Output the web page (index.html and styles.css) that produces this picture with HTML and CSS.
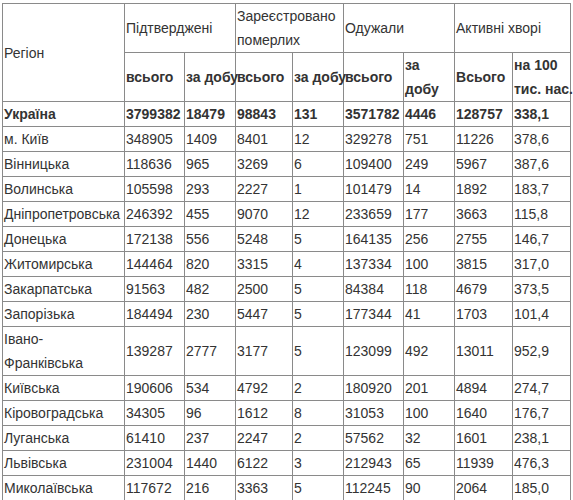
FILE: index.html
```html
<!DOCTYPE html>
<html lang="uk">
<head>
<meta charset="utf-8">
<title>Статистика</title>
<link rel="stylesheet" href="styles.css">
</head>
<body>
<table class="stats">
  <colgroup>
    <col class="c-region">
    <col class="c60"><col class="c51">
    <col class="c57"><col class="c51">
    <col class="c60"><col class="c51">
    <col class="c58"><col class="c58">
  </colgroup>
  <thead>
    <tr class="head1">
      <td rowspan="2">Регіон</td>
      <td colspan="2">Підтверджені</td>
      <td colspan="2">Зареєстровано<br>померлих</td>
      <td colspan="2">Одужали</td>
      <td colspan="2">Активні хворі</td>
    </tr>
    <tr class="head2">
      <td>всього</td><td class="nw">за добу</td>
      <td>всього</td><td class="nw">за добу</td>
      <td>всього</td><td>за<br>добу</td>
      <td>Всього</td><td class="nw">на 100<br>тис. нас.</td>
    </tr>
  </thead>
  <tbody>
    <tr class="total"><td>Україна</td><td>3799382</td><td>18479</td><td>98843</td><td>131</td><td>3571782</td><td>4446</td><td>128757</td><td>338,1</td></tr>
    <tr><td>м. Київ</td><td>348905</td><td>1409</td><td>8401</td><td>12</td><td>329278</td><td>751</td><td>11226</td><td>378,6</td></tr>
    <tr><td>Вінницька</td><td>118636</td><td>965</td><td>3269</td><td>6</td><td>109400</td><td>249</td><td>5967</td><td>387,6</td></tr>
    <tr><td>Волинська</td><td>105598</td><td>293</td><td>2227</td><td>1</td><td>101479</td><td>14</td><td>1892</td><td>183,7</td></tr>
    <tr><td>Дніпропетровська</td><td>246392</td><td>455</td><td>9070</td><td>12</td><td>233659</td><td>177</td><td>3663</td><td>115,8</td></tr>
    <tr><td>Донецька</td><td>172138</td><td>556</td><td>5248</td><td>5</td><td>164135</td><td>256</td><td>2755</td><td>146,7</td></tr>
    <tr><td>Житомирська</td><td>144464</td><td>820</td><td>3315</td><td>4</td><td>137334</td><td>100</td><td>3815</td><td>317,0</td></tr>
    <tr><td>Закарпатська</td><td>91563</td><td>482</td><td>2500</td><td>5</td><td>84384</td><td>118</td><td>4679</td><td>373,5</td></tr>
    <tr><td>Запорізька</td><td>184494</td><td>230</td><td>5447</td><td>5</td><td>177344</td><td>41</td><td>1703</td><td>101,4</td></tr>
    <tr><td>Івано-<br>Франківська</td><td>139287</td><td>2777</td><td>3177</td><td>5</td><td>123099</td><td>492</td><td>13011</td><td>952,9</td></tr>
    <tr><td>Київська</td><td>190606</td><td>534</td><td>4792</td><td>2</td><td>180920</td><td>201</td><td>4894</td><td>274,7</td></tr>
    <tr><td>Кіровоградська</td><td>34305</td><td>96</td><td>1612</td><td>8</td><td>31053</td><td>100</td><td>1640</td><td>176,7</td></tr>
    <tr><td>Луганська</td><td>61410</td><td>237</td><td>2247</td><td>2</td><td>57562</td><td>32</td><td>1601</td><td>238,1</td></tr>
    <tr><td>Львівська</td><td>231004</td><td>1440</td><td>6122</td><td>3</td><td>212943</td><td>65</td><td>11939</td><td>476,3</td></tr>
    <tr><td>Миколаївська</td><td>117672</td><td>216</td><td>3363</td><td>5</td><td>112245</td><td>90</td><td>2064</td><td>185,0</td></tr>
  </tbody>
</table>
</body>
</html>
```
FILE: styles.css
```css
html, body {
  margin: 0;
  padding: 0;
  background: #ffffff;
}
body {
  padding: 3px 0 0 2px;
  font-family: "Liberation Sans", Arial, sans-serif;
  font-size: 14px;
  color: #333333;
}
.stats {
  border-collapse: collapse;
  table-layout: fixed;
  width: 569px;
}
.c-region { width: 122px; }
.c60 { width: 60px; }
.c51 { width: 51px; }
.c57 { width: 57px; }
.c58 { width: 58px; }
.stats td {
  border: 1px solid #8a8a8a;
  padding: 0 1px;
  line-height: 24px;
  vertical-align: middle;
  text-align: left;
}
.head2 td,
.total td {
  font-weight: bold;
}
.nw {
  white-space: nowrap;
}
```
